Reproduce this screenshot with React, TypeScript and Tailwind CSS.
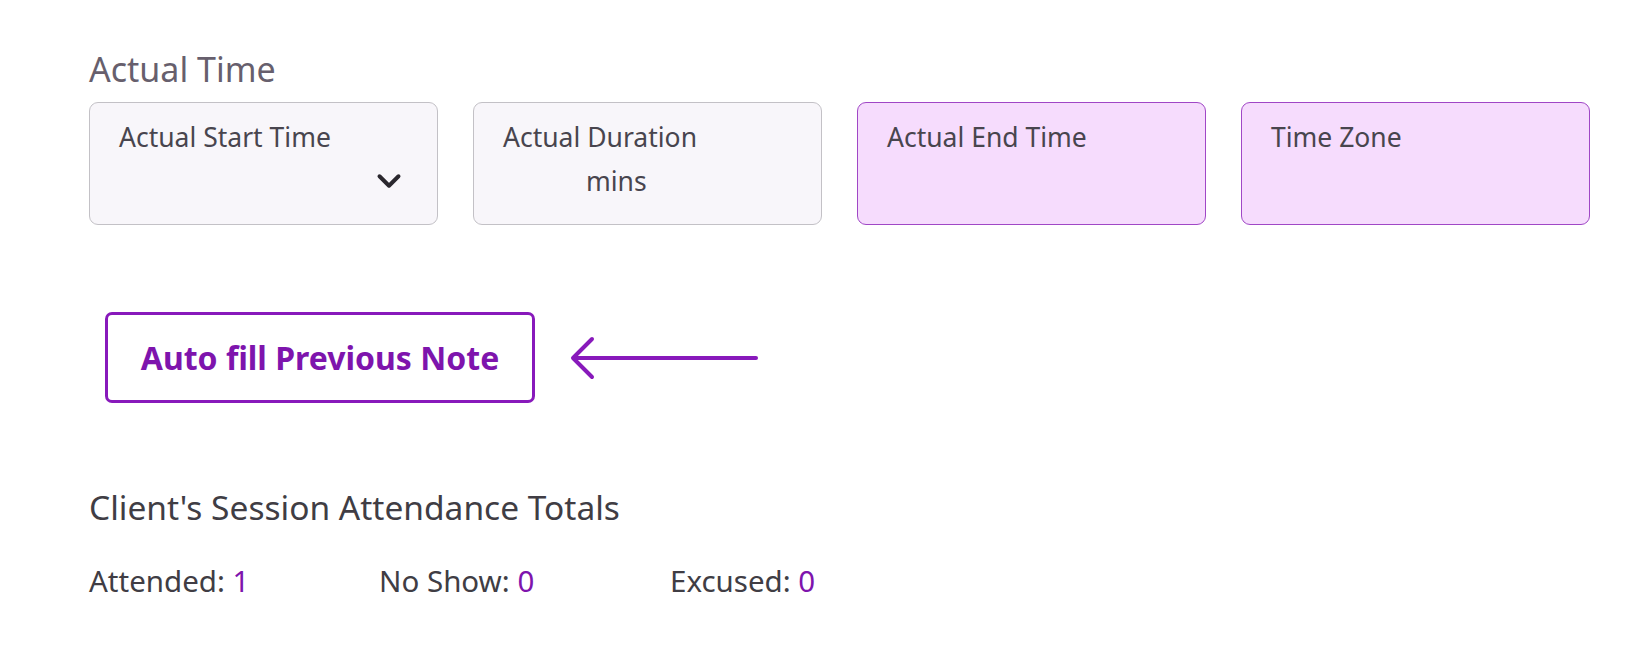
import { ChevronDown } from 'lucide-react';

interface FieldProps {
  label: string;
  tone: 'gray' | 'purple';
  children?: React.ReactNode;
}

const Field = ({ label, tone, children }: FieldProps) => (
  <div
    className={
      tone === 'gray'
        ? 'h-[123px] rounded-[9px] border border-[#c3c1c6] bg-[#f8f6fa] px-[29px] pt-[18px]'
        : 'h-[123px] rounded-[9px] border border-[#a047c6] bg-[#f6dcfd] px-[29px] pt-[18px]'
    }
  >
    <div className="text-[26.5px] leading-[32px] text-[#48454e]">{label}</div>
    {children}
  </div>
);

const App = () => {
  return (
    <div className="min-h-[655px] w-[1647px] bg-white pl-[89px] pt-[48px] font-['Noto_Sans',sans-serif]">
      <h2 className="text-[34px] leading-[42px] text-[#675f6d]">Actual Time</h2>

      <div className="mt-[12px] grid w-[1501px] grid-cols-4 gap-[35px]">
        <Field label="Actual Start Time" tone="gray">
          <div className="mt-[9px] flex justify-end">
            <ChevronDown size={38} strokeWidth={2.5} className="text-[#2a272e]" />
          </div>
        </Field>
        <Field label="Actual Duration" tone="gray">
          <div className="mt-[12px] pl-[83px] text-[26.5px] leading-[32px] text-[#48454e]">mins</div>
        </Field>
        <Field label="Actual End Time" tone="purple" />
        <Field label="Time Zone" tone="purple" />
      </div>

      <div className="mt-[87px] flex items-center pl-[16px]">
        <button className="h-[91px] w-[430px] rounded-[7px] border-[3px] border-[#8819bb] text-[32px] font-bold text-[#7e14ad]">
          Auto fill Previous Note
        </button>
        <svg width="188" height="46" viewBox="0 0 188 46" className="ml-[35px]" fill="none">
          <path d="M186 23H4" stroke="#8819bb" strokeWidth="4" strokeLinecap="round" />
          <path d="M22 4L3 23L22 42" stroke="#8819bb" strokeWidth="4" strokeLinecap="round" strokeLinejoin="round" />
        </svg>
      </div>

      <h3 className="mt-[84px] text-[33.5px] leading-[40px] text-[#403d44]">Client's Session Attendance Totals</h3>

      <div className="mt-[36px] flex text-[29.5px] leading-[36px] text-[#403d44]">
        <div className="w-[290px]">
          Attended: <span className="text-[#7e14ad]">1</span>
        </div>
        <div className="w-[291px]">
          No Show: <span className="text-[#7e14ad]">0</span>
        </div>
        <div>
          Excused: <span className="text-[#7e14ad]">0</span>
        </div>
      </div>
    </div>
  );
};

export default App;
